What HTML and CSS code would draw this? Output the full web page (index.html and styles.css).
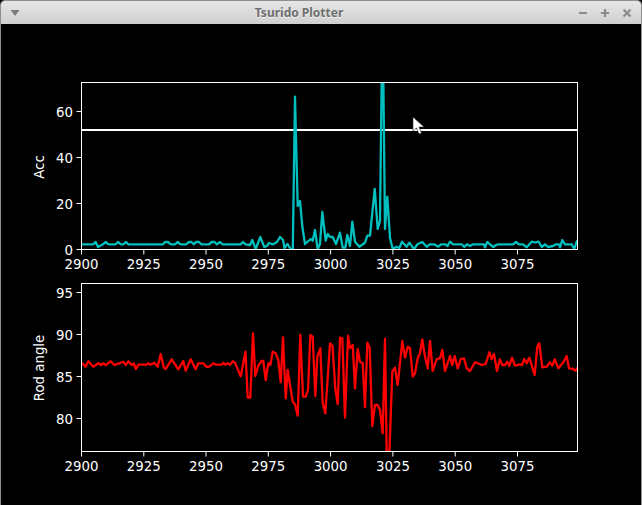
FILE: index.html
```html
<!DOCTYPE html>
<html lang="en">
<head>
<meta charset="utf-8">
<title>Tsurido Plotter</title>
<link rel="stylesheet" href="styles.css">
</head>
<body>
<div class="window">
  <header class="titlebar">
    <svg class="menu-icon" width="10" height="8" viewBox="0 0 10 8"><path d="M.5 1h9L5 7z" fill="#7c7c7c"/></svg>
    <span class="title">Tsurido Plotter</span>
    <div class="controls">
      <svg width="10" height="10" viewBox="0 0 10 10"><path d="M1 5h8" stroke="#8a8a8a" stroke-width="2.200"/></svg>
      <svg width="10" height="10" viewBox="0 0 10 10"><path d="M1 5h8M5 1v8" stroke="#8a8a8a" stroke-width="2.200"/></svg>
      <svg width="10" height="10" viewBox="0 0 10 10"><path d="M1.500 1.500l7 7M8.500 1.500l-7 7" stroke="#8a8a8a" stroke-width="2.200"/></svg>
    </div>
  </header>
  <main class="canvas">
    <svg class="figure" width="640" height="480" viewBox="1 24 640 480">
      <defs>
        <clipPath id="clip-top"><rect x="81" y="82" width="497" height="168"/></clipPath>
        <clipPath id="clip-bottom"><rect x="81" y="283" width="497" height="169"/></clipPath>
      </defs>

      <!-- Acc plot -->
      <g clip-path="url(#clip-top)">
        <line class="limit" x1="81" y1="130" x2="578" y2="130"/>
        <polyline class="trace cyan" points="81.500,244.300 93,244.300 95.700,242 98,247 103,244.300 105.700,242 108.500,244.300 115.500,244.300 118,242 121,244.300 123.500,244.300 125.700,242 128.500,244.300 163,244.300 165,242 168,242 171,244.300 175,244.300 177.700,242 180.500,244.300 186,244.300 189,242 191.500,242 194,244.300 196,242 199,242 201.500,244.300 209,244.300 211.700,242 214.500,242 217,244.300 220,242 222.500,244.300 240.500,244.300 243,242 245.500,244.300 250,245 252.300,240 255.700,249 260.300,237 264.300,247 267,246 269,243 273,244.300 277,242 280,237 283,240 284.500,248 287.500,244 290.700,249 292.800,249 295,96.700 297.700,206 300,201 302.500,228 305,244 310.700,239 312.700,240.700 315,230 317.700,249 320,244 322.300,212 325.700,240.700 327.700,234 330,237 332.700,237 336,244 340,232.700 342.700,247.700 345.300,247.700 347.300,235 350,246 352.300,221.700 355,241.700 359.300,246.700 365,242.700 367.300,235.700 370,235.700 374.700,189 377.700,229 380,220.700 381.700,76 383.300,76 385,229 387.300,196.700 390,238 392.700,249 396.700,246.700 399.300,248 402,241.700 406.700,246.700 409.300,242.700 414,249 417.700,244 422.300,242 426.700,246.700 430,244.300 434,244.300 438.300,246.700 441,244.300 445,244.300 447.500,246 450,241.700 453,244.300 461.700,244.300 464.300,247 467,244.300 470,246 473,244.300 484,244.300 485,247.300 487.300,242 490,244.300 493.300,247 496,245 498.300,244.300 513,244.300 516,242 519,244.300 523,244.300 526.700,247.300 531.700,241.700 535,242.500 538.700,241.700 541.700,247 545,244.300 548,247 553,246 556,244.300 559,244.300 560,247.300 562.300,240 565,244.300 571.700,244.300 574.300,249 576.700,241.700 578,240"/>
      </g>
      <rect class="frame" x="81.500" y="82.500" width="496" height="167"/>
      <path class="tick" d="M81.500 249.500v5M143.800 249.500v5M206 249.500v5M268.300 249.500v5M330.600 249.500v5M392.900 249.500v5M455.200 249.500v5M517.500 249.500v5M81.500 249.500h-5M81.500 203.500h-5M81.500 157.500h-5M81.500 111.500h-5"/>
      <g class="x-labels">
        <text x="81.500" y="269">2900</text><text x="143.800" y="269">2925</text><text x="206" y="269">2950</text><text x="268.300" y="269">2975</text><text x="330.600" y="269">3000</text><text x="392.900" y="269">3025</text><text x="455.200" y="269">3050</text><text x="517.500" y="269">3075</text>
      </g>
      <g class="y-labels">
        <text x="73" y="254.500">0</text><text x="73" y="208.500">20</text><text x="73" y="162.500">40</text><text x="73" y="116.500">60</text>
      </g>
      <text class="y-title" transform="translate(44 167) rotate(-90)">Acc</text>

      <!-- Rod angle plot -->
      <g clip-path="url(#clip-bottom)">
        <polyline class="trace red" points="81.500,364 82.300,363.300 85.700,366.700 88.300,361.300 93.300,366.700 98.300,363.300 101,365 103,363.300 105.700,365 110.700,361.300 114.300,365 118.300,363.700 123.300,361.700 125.700,365 128.300,361.300 131.700,365 133.700,363.300 136,369 138.300,364.700 146.700,364.700 148.300,363.300 150.300,364.700 154.300,362.700 157.700,366.700 160.700,354 163.700,367.300 165.700,369 171.700,359.300 178.300,369.300 183.300,361 185.700,370.700 190.700,359.300 195.700,369.300 198.300,363.300 203.300,363.300 206.700,367 209.300,366.700 213.300,363.300 216,364.700 221.700,364.700 223.300,363 225.300,364.700 227.700,363.300 230,364.700 232.700,361.300 235,362.700 240.700,376.300 245.500,351.700 247.700,397.700 250.300,397.700 253,333.300 255.300,376 258.300,365.700 261.700,361 263.300,361 265.700,380 268.300,363.300 270.300,365 272.700,351.700 275.700,353.300 278.300,360 280.700,382.300 283,337.300 285.700,398.300 287.700,370 290,385 292.700,401.700 295,404.300 297.700,415.700 300.300,335 303,396.700 305.700,396.700 308,390 310.300,335 312.700,336.700 315.300,396 317.300,356.700 320.300,348.300 322.700,403.300 325.300,413.300 330,343.300 332.500,346 335.300,388.300 337.700,404 340,337.700 342.300,338.300 345,417.700 348,335.700 350,348.300 352.700,345 355,388.300 357.700,349 360,361.700 362.700,363.300 365,407.300 367.300,342.700 369.700,347.700 372.300,426 375,405 377.700,405 380,410 382.700,433.300 385,339 386.700,455 389.300,455 392.300,371.700 395,367.700 397.700,385 402.300,341 405,357.700 407.700,346.700 410,348.300 412.700,376.700 415,373.300 417.700,358.300 420,353.300 422.300,339.500 424.700,355 427.700,368.300 430,341 432.700,371 436.700,359 440,358.300 442.300,350 445,371 450,356 452.300,365 454.700,356 457.700,368.300 460.700,359 464,358.300 466.700,368.300 470,371 475,362.300 478.300,363.300 481.700,365 485.700,364 489.300,352.300 491.700,359 494,354 497,371 499.700,359.300 502.300,365 505,365 507.300,361.700 509.300,366 512,357.700 515,365.700 520,364.300 522,365 524.300,359 526.700,363.300 529.300,357.700 534.700,375 537.300,346.700 539.300,343.300 542.300,367.300 546.700,366.700 550,362.300 552.300,365.700 554.700,359.300 558.300,368.300 563.300,362.300 566.700,356 569,368.300 573.300,369 575.700,370.700 578,366.700"/>
      </g>
      <rect class="frame" x="81.500" y="283.500" width="496" height="168"/>
      <path class="tick" d="M81.500 451.500v5M143.800 451.500v5M206 451.500v5M268.300 451.500v5M330.600 451.500v5M392.900 451.500v5M455.200 451.500v5M517.500 451.500v5M81.500 418.500h-5M81.500 376.500h-5M81.500 334.500h-5M81.500 292.500h-5"/>
      <g class="x-labels">
        <text x="81.500" y="471">2900</text><text x="143.800" y="471">2925</text><text x="206" y="471">2950</text><text x="268.300" y="471">2975</text><text x="330.600" y="471">3000</text><text x="392.900" y="471">3025</text><text x="455.200" y="471">3050</text><text x="517.500" y="471">3075</text>
      </g>
      <g class="y-labels">
        <text x="73" y="423.500">80</text><text x="73" y="381.500">85</text><text x="73" y="339.500">90</text><text x="73" y="297.500">95</text>
      </g>
      <text class="y-title" transform="translate(44 368) rotate(-90)">Rod angle</text>
    </svg>
    <svg class="cursor" width="14" height="20" viewBox="0 0 14 20"><path d="M1 1v14l3.500-3 2.500 6 2.500-1-2.500-6h5z" fill="#fff" stroke="#333" stroke-width=".6"/></svg>
  </main>
</div>
</body>
</html>
```

FILE: styles.css
```css
html, body {
  margin: 0;
  padding: 0;
  background: #000;
}
.window {
  width: 642px;
  height: 505px;
  display: flex;
  flex-direction: column;
  box-sizing: border-box;
  border: 1px solid #8f8f8f;
  border-bottom: 0;
  border-radius: 5px 5px 0 0;
  overflow: hidden;
  background: #000;
}
.titlebar {
  height: 23px;
  flex: none;
  box-sizing: border-box;
  display: flex;
  align-items: center;
  justify-content: space-between;
  padding: 0 9px 0 9px;
  position: relative;
  background: linear-gradient(#e6e6e6, #cfcfcf);
}
.title {
  position: absolute;
  left: 0;
  right: 44px;
  text-align: center;
  font: 700 12px "Noto Sans", sans-serif;
  color: #6e6e6e;
  text-shadow: 0 1px 0 #f4f4f4;
}
.controls {
  display: flex;
  gap: 12px;
}
.canvas {
  flex: 1;
  position: relative;
  background: #000;
}
.figure {
  display: block;
}
.frame {
  fill: none;
  stroke: #fff;
  stroke-width: 1;
}
.tick {
  fill: none;
  stroke: #fff;
  stroke-width: 1;
}
.limit {
  stroke: #fff;
  stroke-width: 2;
}
.trace {
  fill: none;
  stroke-width: 2.300;
  stroke-linejoin: round;
}
.cyan { stroke: #00bfbf; }
.red { stroke: #ff0000; }
text {
  font-family: "DejaVu Sans", sans-serif;
  font-size: 13.330px;
  fill: #fff;
}
.x-labels text { text-anchor: middle; }
.y-labels text { text-anchor: end; }
.y-title { text-anchor: middle; }
.cursor {
  position: absolute;
  left: 411px;
  top: 92px;
}
```
